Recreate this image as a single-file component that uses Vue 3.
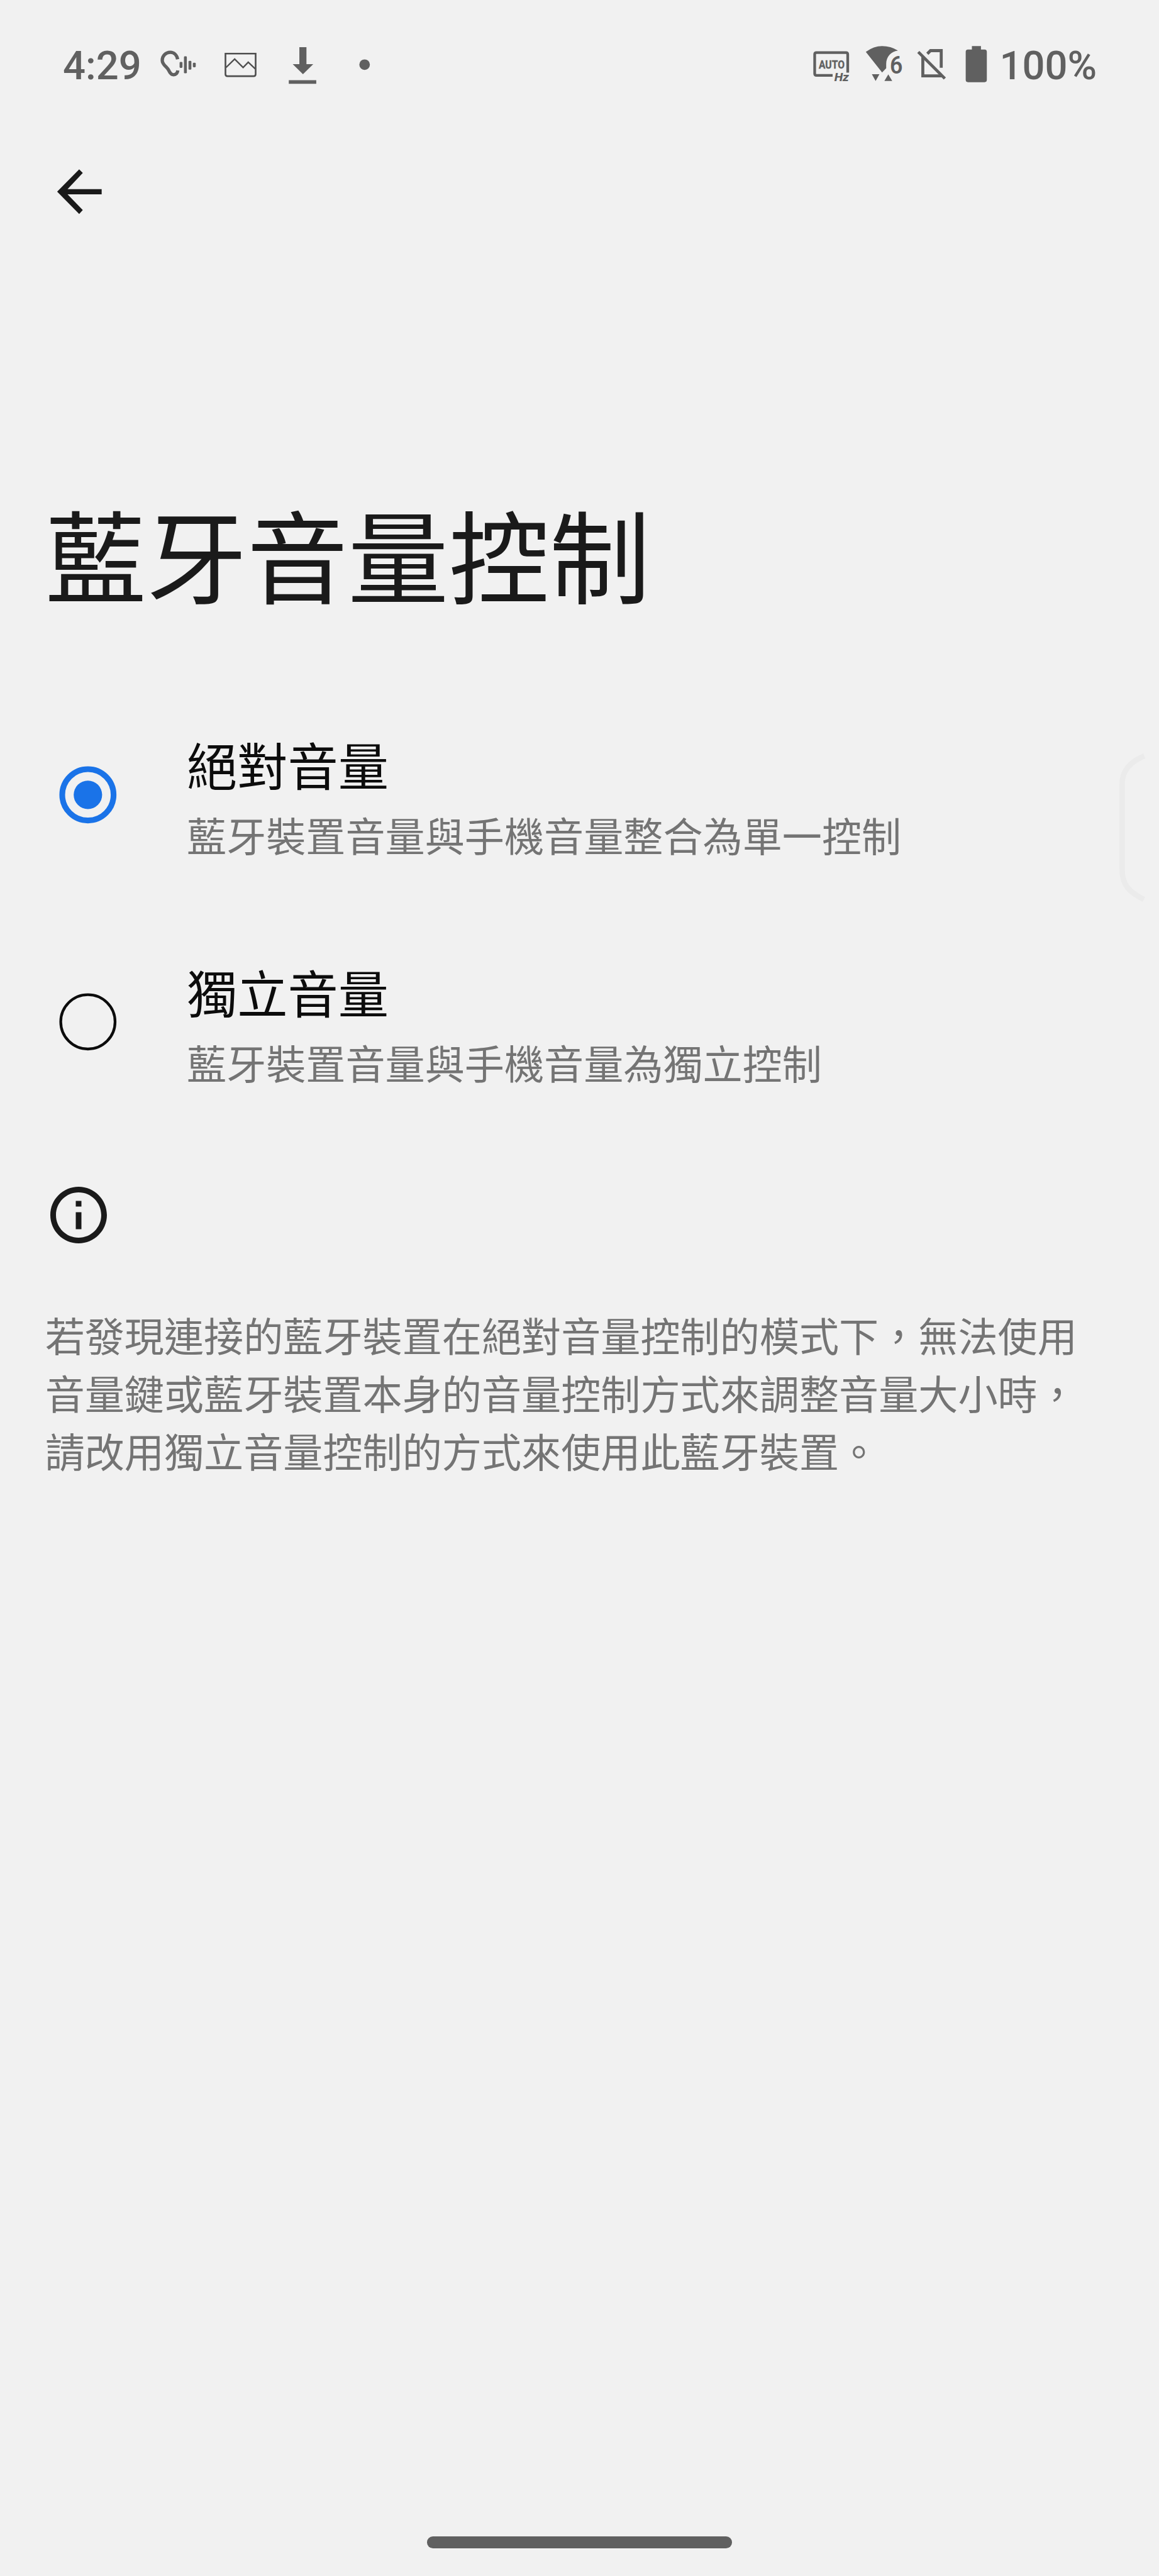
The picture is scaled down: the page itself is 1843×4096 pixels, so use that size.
<script setup>
import { ref } from 'vue'

const selected = ref('absolute')
const options = [
  { id: 'absolute', title: '絕對音量', summary: '藍牙裝置音量與手機音量整合為單一控制' },
  { id: 'separate', title: '獨立音量', summary: '藍牙裝置音量與手機音量為獨立控制' },
]
const notes = [
  '若發現連接的藍牙裝置在絕對音量控制的模式下，無法使用',
  '音量鍵或藍牙裝置本身的音量控制方式來調整音量大小時，',
  '請改用獨立音量控制的方式來使用此藍牙裝置。',
]
</script>

<template>
  <div class="screen">
    <header class="status">
      <span class="clock">4:29</span>
      <svg class="ear" viewBox="750 120 270 240">
        <path d="M877 213C872 184 852 166 828 166C798 166 775 190 775 219C775 235 783 246 795 258C806 269 812 274 819 288C826 303 835 315 851 315C866 315 876 304 878 287" fill="none" stroke="#606060" stroke-width="22" />
        <g fill="#606060">
          <rect x="890" y="230" width="19" height="40" rx="6" />
          <rect x="919" y="193" width="19" height="113" rx="6" />
          <rect x="949" y="223" width="19" height="59" rx="6" />
          <rect x="978" y="236" width="19" height="30" rx="6" />
        </g>
      </svg>
      <svg class="photo" viewBox="90 120 240 240" fill="none" stroke="#4e4e4e" stroke-width="11">
        <path d="M113 175H313V312Q313 325 300 325H126Q113 325 113 312Z" />
        <path d="M117 267L174 211L230 267L264 232L310 276" stroke-width="10" />
      </svg>
      <svg class="download" viewBox="510 120 240 270" fill="#606060">
        <path d="M606 132H653V245H698L630 312L562 245H606ZM536 351H718V375H536Z" />
      </svg>
      <svg class="more" viewBox="993 202 90 90"><circle cx="1038" cy="247" r="35" fill="#606060" /></svg>
      <span class="spacer"></span>
      <svg class="hz" viewBox="90 105 270 285">
        <path d="M236 321H129Q117 321 117 309V182Q117 170 129 170H324Q336 170 336 182V303" fill="none" stroke="#606060" stroke-width="18" />
        <text x="144" y="275" font-size="79" font-weight="700" textLength="171" lengthAdjust="spacingAndGlyphs" stroke="#606060" stroke-width="1.5">AUTO</text>
        <text x="247" y="360" font-size="73" font-weight="800" font-style="italic" textLength="97" lengthAdjust="spacingAndGlyphs">Hz</text>
      </svg>
      <svg class="wifi" viewBox="435 105 285 285" fill="#606060">
        <path d="M455 165Q508 127 563 127Q620 127 668 157C622 163 590 197 590 245V274L563 302Z" />
        <path d="M495 313H545L520 358ZM578 358H630L604 314Z" />
        <text x="614" y="308" font-size="165" font-weight="600" textLength="85" lengthAdjust="spacingAndGlyphs">6</text>
      </svg>
      <svg class="sim" viewBox="780 105 240 285" fill="none" stroke="#606060" stroke-width="20">
        <path d="M836 196V324H962M866 178L887 157H958V271" />
        <path d="M806 166L982 342" />
      </svg>
      <svg class="battery" viewBox="210 105 165 285" fill="#606060">
        <path d="M262 127H322V150H346Q361 150 361 165V351Q361 366 346 366H236Q221 366 221 351V165Q221 150 236 150H262Z" />
      </svg>
      <span class="percent">100%</span>
    </header>

    <nav class="toolbar">
      <svg class="back" viewBox="0 0 600 480"><path d="M432 232H206L307 125L283 101L137 249L283 397L307 371L206 267H432Z" fill="#1a1a1a" /></svg>
    </nav>

    <h1>藍牙音量控制</h1>

    <main>
      <div v-for="o in options" :key="o.id" class="option" @click="selected = o.id">
        <svg class="radio" viewBox="0 0 130 130">
          <template v-if="selected === o.id">
            <circle cx="65" cy="65" r="56.7" fill="none" stroke="#1a73e8" stroke-width="12.6" />
            <circle cx="65" cy="65" r="31.4" fill="#1a73e8" />
          </template>
          <circle v-else cx="65" cy="65" r="60" fill="none" stroke="#0c0c0c" stroke-width="6" />
        </svg>
        <div class="labels">
          <div class="name">{{ o.title }}</div>
          <div class="summary">{{ o.summary }}</div>
        </div>
      </div>
      <svg class="info" viewBox="0 0 24 24" fill="#1a1a1a">
        <path d="M11 7h2v2h-2zm0 4h2v6h-2zm1-9C6.48 2 2 6.48 2 12s4.48 10 10 10 10-4.48 10-10S17.52 2 12 2zm0 18c-4.41 0-8-3.59-8-8s3.59-8 8-8 8 3.59 8 8-3.59 8-8 8z" />
      </svg>
      <p class="note"><span v-for="n in notes" :key="n">{{ n }}</span></p>
    </main>

    <svg class="edge" viewBox="0 0 120 400"><path d="M87 50C58 62 38 80 38 112V300C38 334 52 350 86 367" fill="none" stroke="#ebebeb" stroke-width="12" /></svg>
    <footer><div class="home"></div></footer>
  </div>
</template>

<style>
body { background: #f1f1f1; }
</style>

<style scoped>
.screen {
  --u: 0.71992px;
  position: relative;
  display: flex;
  flex-direction: column;
  width: 1843px;
  height: 4096px;
  overflow: hidden;
  background: #f1f1f1;
  color: #1a1a1a;
  font-family: "Noto Sans CJK TC", sans-serif;
}
svg { display: block; flex: none; }
.status {
  display: flex;
  flex: none;
  align-items: flex-start;
  height: calc(340 * var(--u));
  box-sizing: border-box;
  padding: calc(95 * var(--u)) calc(138 * var(--u)) 0 calc(139 * var(--u));
  color: #606060;
  font-family: Roboto, sans-serif;
}
.clock, .percent {
  margin-top: calc(2 * var(--u));
  font-size: calc(88 * var(--u));
  font-weight: 500;
  line-height: calc(96 * var(--u));
  white-space: nowrap;
}
.clock { width: calc(211 * var(--u)); }
.percent { width: calc(214 * var(--u)); }
.status svg text { fill: #606060; font-family: Roboto, sans-serif; }
.ear { width: calc(90 * var(--u)); height: calc(80 * var(--u)); margin-top: calc(5 * var(--u)); }
.photo { width: calc(80 * var(--u)); height: calc(80 * var(--u)); margin: calc(5 * var(--u)) 0 0 calc(50 * var(--u)); }
.download { width: calc(80 * var(--u)); height: calc(90 * var(--u)); margin: calc(5 * var(--u)) 0 0 calc(60 * var(--u)); }
.more { width: calc(30 * var(--u)); height: calc(30 * var(--u)); margin: calc(32.3 * var(--u)) 0 0 calc(81 * var(--u)); }
.spacer { flex: 1; }
.hz { width: calc(90 * var(--u)); height: calc(95 * var(--u)); margin-right: calc(25 * var(--u)); }
.wifi { width: calc(95 * var(--u)); height: calc(95 * var(--u)); margin-right: calc(20 * var(--u)); }
.sim { width: calc(80 * var(--u)); height: calc(95 * var(--u)); margin-right: calc(30 * var(--u)); }
.battery { width: calc(55 * var(--u)); height: calc(95 * var(--u)); margin-right: calc(23 * var(--u)); }
.toolbar { flex: none; height: calc(750.5 * var(--u)); padding-left: calc(80 * var(--u)); }
.back { width: calc(200 * var(--u)); height: calc(160 * var(--u)); }
h1 {
  flex: none;
  margin: 0 0 0 calc(100 * var(--u));
  font-size: calc(222.8 * var(--u));
  font-weight: 400;
  line-height: calc(260 * var(--u));
  white-space: nowrap;
}
main { flex: 1; padding-top: calc(272.1 * var(--u)); }
.option { display: flex; height: calc(502.3 * var(--u)); }
.radio { width: calc(130 * var(--u)); height: calc(130 * var(--u)); margin: calc(67.7 * var(--u)) calc(154 * var(--u)) 0 calc(128.5 * var(--u)); }
.labels { white-space: nowrap; }
.name { color: #0c0c0c; font-size: calc(111.5 * var(--u)); line-height: calc(130 * var(--u)); }
.summary { margin-top: calc(39.4 * var(--u)); color: #747474; font-size: calc(87.7 * var(--u)); line-height: calc(102 * var(--u)); }
.info { width: calc(150 * var(--u)); height: calc(150 * var(--u)); margin: calc(-18 * var(--u)) 0 0 calc(99.3 * var(--u)); }
.note {
  display: flex;
  flex-direction: column;
  margin: calc(124 * var(--u)) 0 0 calc(99.5 * var(--u));
  color: #747474;
  font-size: calc(87.7 * var(--u));
  line-height: calc(128 * var(--u));
  white-space: nowrap;
}
.edge {
  position: absolute;
  top: calc(1620 * var(--u));
  right: 0;
  width: calc(120 * var(--u));
  height: calc(400 * var(--u));
}
footer { display: flex; justify-content: center; flex: none; height: calc(88 * var(--u)); }
.home { width: calc(673 * var(--u)); height: calc(26.4 * var(--u)); border-radius: calc(13 * var(--u)); background: #606060; }
</style>
